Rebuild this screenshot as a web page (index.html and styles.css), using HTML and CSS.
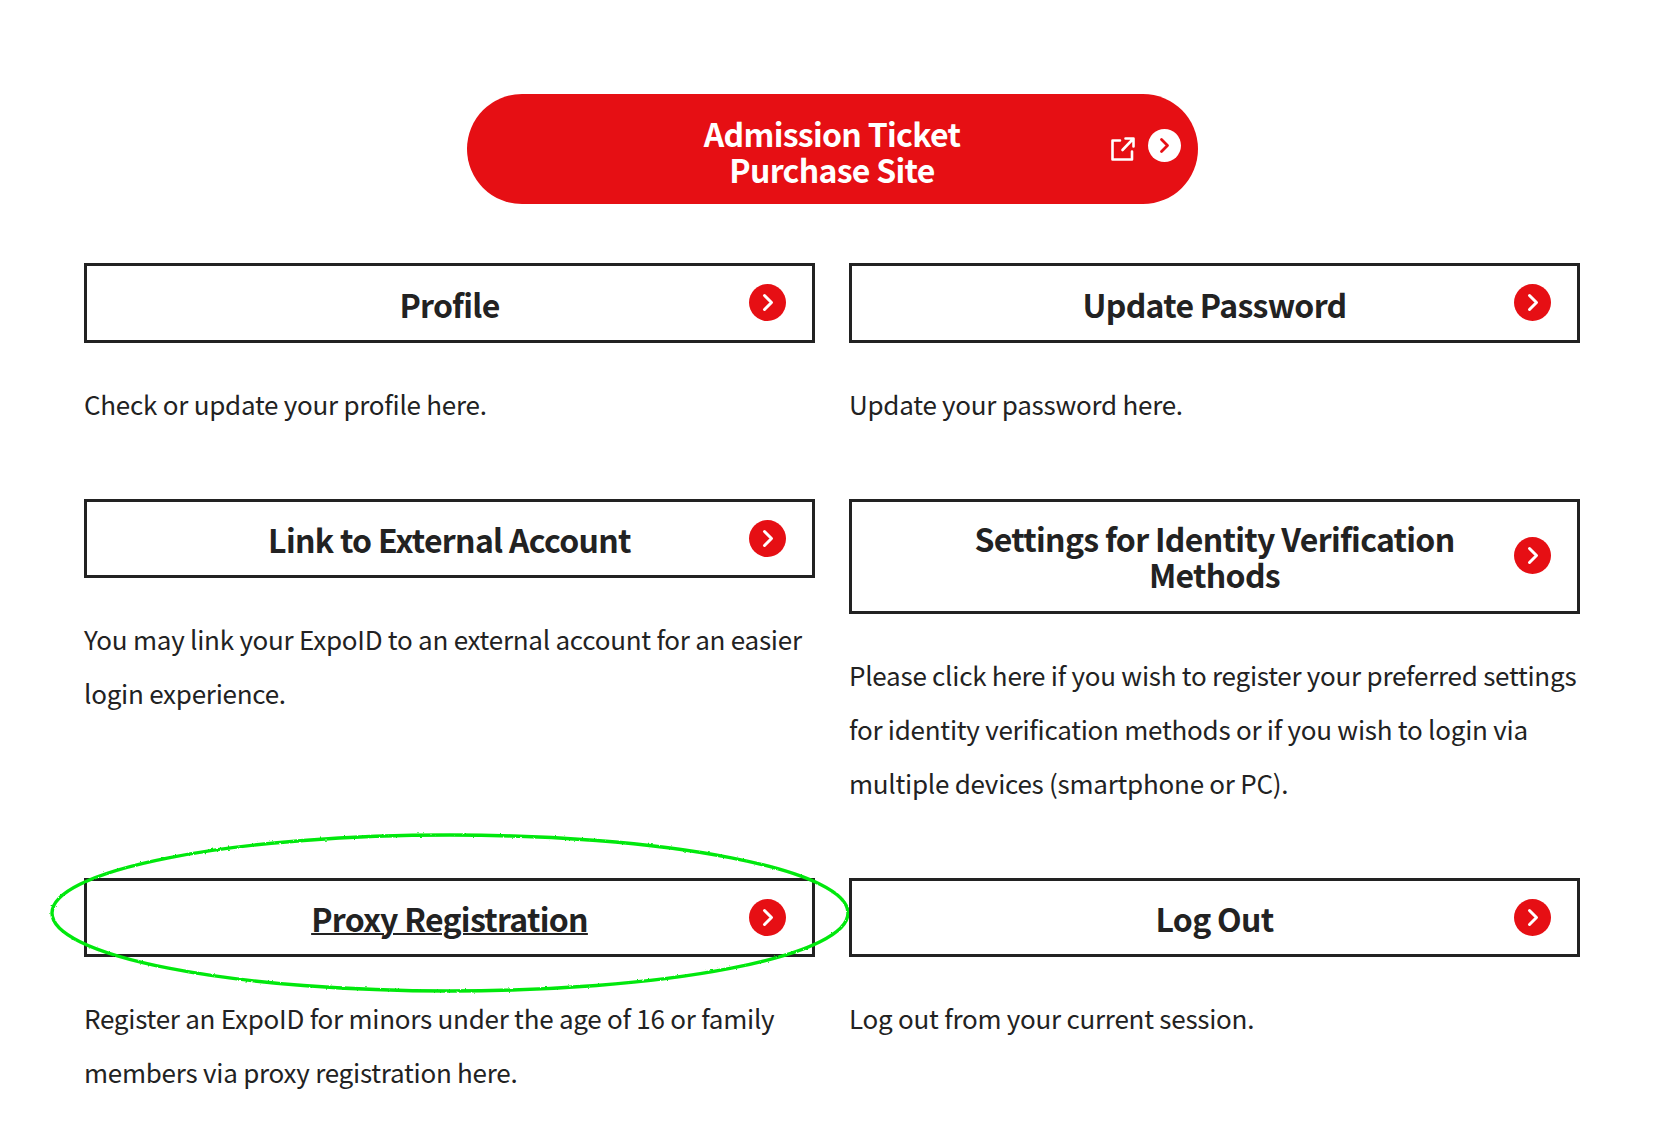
FILE: index.html
```html
<!DOCTYPE html>
<html lang="en">
<head>
    <meta charset="UTF-8">
    <meta name="viewport" content="width=device-width, initial-scale=1.0">
    <title>My Page</title>
    <link rel="stylesheet" href="styles.css">
</head>
<body>
    <div class="container">
        <a class="ticket-button" href="#">
            <span class="ticket-label">Admission Ticket<br>Purchase Site</span>
            <svg class="external-icon" viewBox="0 0 24 24" fill="none" stroke="#fff" stroke-width="2.6" stroke-linecap="round" stroke-linejoin="round">
                <path d="M9 3.5H1.5V22.5H21V14.5"/>
                <path d="M11.5 13L22 2M14.5 1.5H22.5V9.5"/>
            </svg>
            <svg class="ticket-arrow" viewBox="0 0 33 33">
                <circle cx="16.5" cy="16.5" r="16.5" fill="#fff"/>
                <path d="M13.5 10.5L19.5 16.5L13.5 22.5" fill="none" stroke="#e60f14" stroke-width="2.8" stroke-linecap="round" stroke-linejoin="round"/>
            </svg>
        </a>

        <div class="menu">
            <div class="menu-item">
                <a class="menu-button" href="#"><span>Profile</span>
                    <svg class="arrow" viewBox="0 0 37 37"><circle cx="18.5" cy="18.5" r="18.5" fill="#e60f14"/><path d="M15.5 11.5L22.5 18.5L15.5 25.5" fill="none" stroke="#fff" stroke-width="3" stroke-linecap="round" stroke-linejoin="round"/></svg>
                </a>
                <p>Check or update your profile here.</p>
            </div>
            <div class="menu-item">
                <a class="menu-button" href="#"><span>Update Password</span>
                    <svg class="arrow" viewBox="0 0 37 37"><circle cx="18.5" cy="18.5" r="18.5" fill="#e60f14"/><path d="M15.5 11.5L22.5 18.5L15.5 25.5" fill="none" stroke="#fff" stroke-width="3" stroke-linecap="round" stroke-linejoin="round"/></svg>
                </a>
                <p>Update your password here.</p>
            </div>
            <div class="menu-item">
                <a class="menu-button" href="#"><span>Link to External Account</span>
                    <svg class="arrow" viewBox="0 0 37 37"><circle cx="18.5" cy="18.5" r="18.5" fill="#e60f14"/><path d="M15.5 11.5L22.5 18.5L15.5 25.5" fill="none" stroke="#fff" stroke-width="3" stroke-linecap="round" stroke-linejoin="round"/></svg>
                </a>
                <p>You may link your ExpoID to an external account for an easier login experience.</p>
            </div>
            <div class="menu-item">
                <a class="menu-button tall" href="#"><span>Settings for Identity Verification<br>Methods</span>
                    <svg class="arrow" viewBox="0 0 37 37"><circle cx="18.5" cy="18.5" r="18.5" fill="#e60f14"/><path d="M15.5 11.5L22.5 18.5L15.5 25.5" fill="none" stroke="#fff" stroke-width="3" stroke-linecap="round" stroke-linejoin="round"/></svg>
                </a>
                <p>Please click here if you wish to register your preferred settings for identity verification methods or if you wish to login via multiple devices (smartphone or PC).</p>
            </div>
            <div class="menu-item">
                <a class="menu-button underlined" href="#"><span>Proxy Registration</span>
                    <svg class="arrow" viewBox="0 0 37 37"><circle cx="18.5" cy="18.5" r="18.5" fill="#e60f14"/><path d="M15.5 11.5L22.5 18.5L15.5 25.5" fill="none" stroke="#fff" stroke-width="3" stroke-linecap="round" stroke-linejoin="round"/></svg>
                </a>
                <p>Register an ExpoID for minors under the age of 16 or family members via proxy registration here.</p>
                <svg class="highlight" viewBox="0 0 804 164" fill="none">
                    <filter id="rough">
                        <feTurbulence type="fractalNoise" baseFrequency="0.35" numOctaves="2" seed="4"/>
                        <feDisplacementMap in="SourceGraphic" scale="2.2"/>
                    </filter>
                    <ellipse cx="402" cy="82" rx="398" ry="78" stroke="#00e80a" stroke-width="3.4" filter="url(#rough)"/>
                </svg>
            </div>
            <div class="menu-item">
                <a class="menu-button" href="#"><span>Log Out</span>
                    <svg class="arrow" viewBox="0 0 37 37"><circle cx="18.5" cy="18.5" r="18.5" fill="#e60f14"/><path d="M15.5 11.5L22.5 18.5L15.5 25.5" fill="none" stroke="#fff" stroke-width="3" stroke-linecap="round" stroke-linejoin="round"/></svg>
                </a>
                <p>Log out from your current session.</p>
            </div>
        </div>
    </div>
</body>
</html>
```

FILE: styles.css
```css
body {
    font-family: "Noto Sans CJK JP", "Noto Sans", sans-serif;
    margin: 0;
    padding: 0;
    background-color: #fff;
    color: #222;
}
.container {
    padding: 94px 90px 0 84px;
}
.ticket-button {
    position: relative;
    display: flex;
    align-items: center;
    justify-content: center;
    width: 731px;
    height: 110px;
    margin: 0 auto 59px;
    border-radius: 55px;
    background-color: #e60f14;
    color: #fff;
    font-size: 32px;
    font-weight: 700;
    letter-spacing: -0.7px;
    line-height: 36px;
    text-align: center;
    text-decoration: none;
}
.ticket-label {
    padding-top: 4px;
}
.external-icon {
    position: absolute;
    left: 644px;
    top: 43px;
    width: 24px;
    height: 24px;
}
.ticket-arrow {
    position: absolute;
    left: 681px;
    top: 35px;
    width: 33px;
    height: 33px;
}
.menu {
    display: grid;
    grid-template-columns: 731px 731px;
    column-gap: 34px;
    row-gap: 68px;
}
.menu-item {
    position: relative;
}
.menu-item p {
    margin: 34px 0 0;
    font-size: 26px;
    letter-spacing: -0.25px;
    line-height: 54px;
}
.menu-button {
    position: relative;
    display: block;
    box-sizing: border-box;
    padding: 19.8px 70px 17.8px;
    border: 3px solid #222;
    color: #222;
    font-size: 32px;
    font-weight: 700;
    letter-spacing: -0.7px;
    line-height: 36px;
    text-align: center;
    text-decoration: none;
}
.menu-button.tall {
    padding-top: 18.8px;
    padding-bottom: 18.2px;
}
.underlined span {
    text-decoration: underline;
    text-decoration-thickness: 2px;
}
.arrow {
    position: absolute;
    right: 26px;
    top: 50%;
    width: 37px;
    height: 37px;
    margin-top: -18.5px;
}
.tall .arrow {
    margin-top: -19.5px;
}
.highlight {
    position: absolute;
    left: -36px;
    top: -47px;
    width: 804px;
    height: 164px;
    pointer-events: none;
}
```
